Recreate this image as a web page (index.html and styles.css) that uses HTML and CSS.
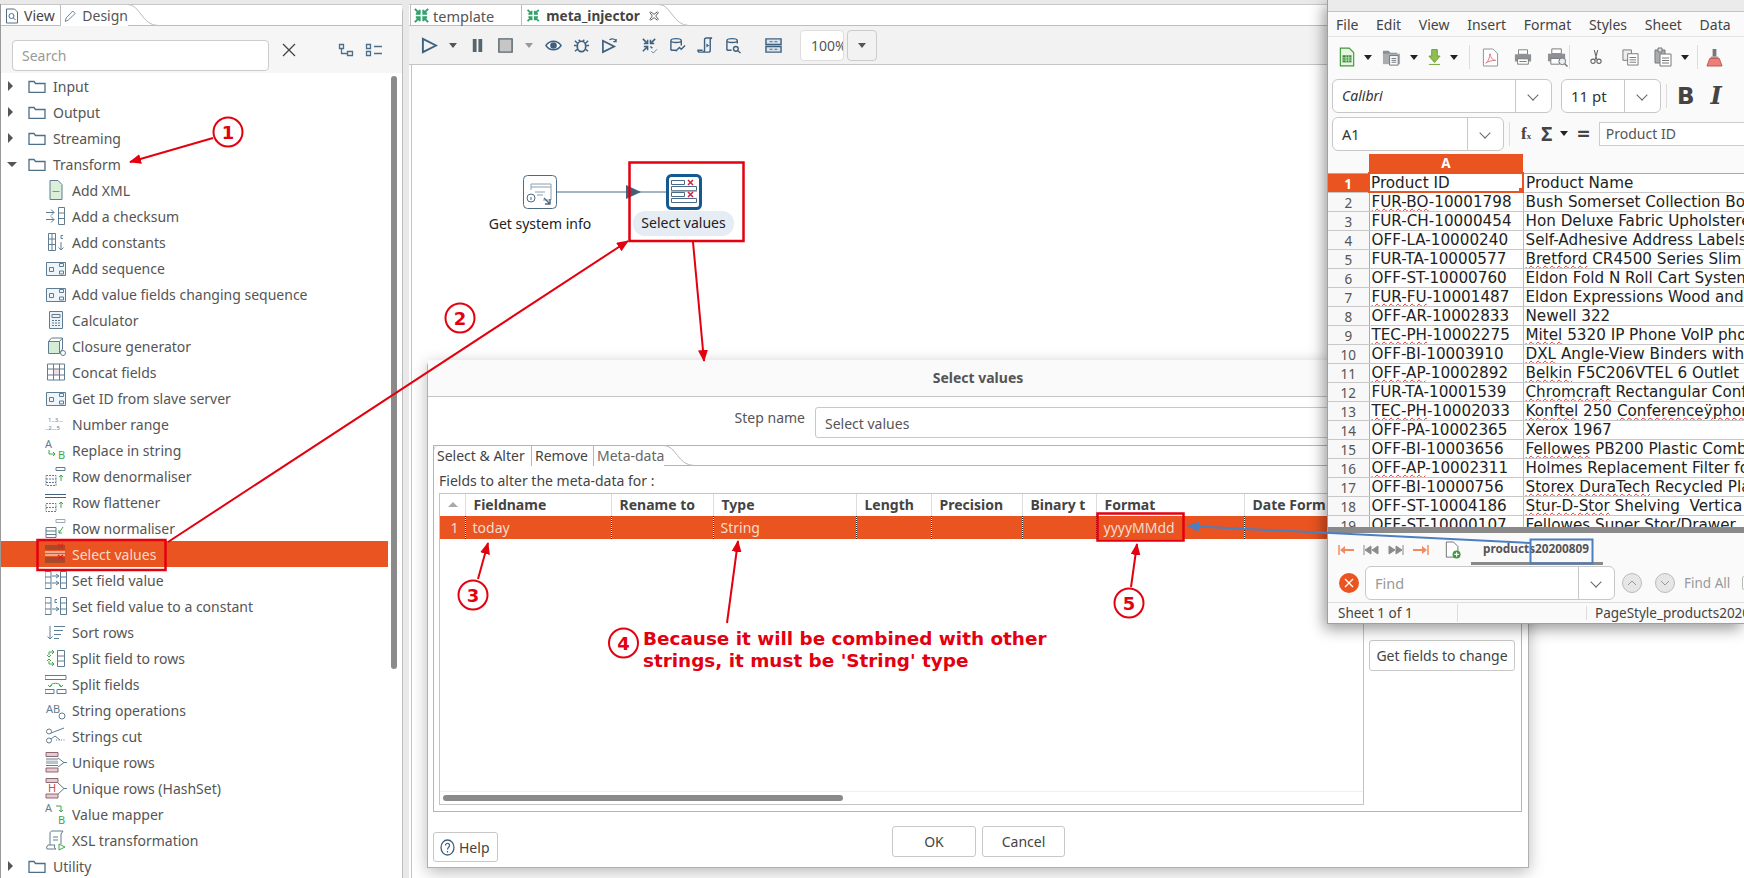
FILE: index.html
```html
<!DOCTYPE html>
<html lang="en">
<head>
  <meta charset="UTF-8" />
  <title>Select values - meta_injector</title>
  <link rel="stylesheet" href="styles.css">
</head>
<body>
  <!-- icon sprite -->
  <svg class="sprite" width="0" height="0">
    <symbol id="i-folder" viewBox="0 0 18 14"><path d="M1 2.500h5l1.500 2H17v9H1z" fill="#fff" stroke="#4d6f8a" stroke-width="1.300"/></symbol>
    <symbol id="i-xml" viewBox="0 0 22 22"><path d="M5 1.500h8l4 4v15H5z" fill="#dcefd8"/><path d="M7.500 12.500h7" stroke="#7b9a8a"/></symbol>
    <symbol id="i-checksum" viewBox="0 0 22 22"><path d="M1 7.500h8M6 4.500l3 3-3 3M1 14.500h8M6 11.500l3 3-3 3"/><path d="M13.500 2.500h6v17h-6zM13.500 8h6M13.500 13.500h6"/></symbol>
    <symbol id="i-constants" viewBox="0 0 22 22"><path d="M3.500 2.500h7v17h-7zM3.500 8h7M3.500 13.500h7M7 2.500v17M16 11v8M13.500 16.500l2.500 2.500 2.500-2.500"/><path d="M18 4.500h-2v3h2"/></symbol>
    <symbol id="i-seq" viewBox="0 0 22 22"><path d="M1.500 5.500h19v13h-19z" fill="#eef5fa"/><path d="M4.500 10.500h4v4h-4zM14.500 6.500h4v3h-4zM14.500 14h4v3h-4z"/></symbol>
    <symbol id="i-calc" viewBox="0 0 22 22"><path d="M4.500 2.500h13v17h-13z" fill="#eef3f6"/><path d="M7 5.500h8v3H7zM7 11.500h2M10 11.500h2M13 11.500h2M7 14h2M10 14h2M13 14h2M7 16.500h2M10 16.500h2M13 16.500h2"/></symbol>
    <symbol id="i-closure" viewBox="0 0 22 22"><path d="M3.500 6.500h11v12h-11z" fill="#d5ecd5"/><path d="M3.500 6.500l3-3.500h11v11l-3 4M14.500 6.500l3-3.500"/><circle cx="18" cy="18" r="2.500" fill="#fff"/></symbol>
    <symbol id="i-grid" viewBox="0 0 22 22"><path d="M8.500 8h6v6h-6z" fill="#f6dde4" stroke="none"/><path d="M2.500 3h17v16h-17zM2.500 8h17M2.500 14h17M8.500 3v16M14.500 3v16"/></symbol>
    <symbol id="i-denorm" viewBox="0 0 22 22"><path d="M11 2.500h9v3h-9z"/><path stroke-dasharray="2 1" d="M1 10.500h10v10H1zM1 14h10M1 17.500h10"/><path class="g" d="M16 16V10M14 12l2-2 2 2"/></symbol>
    <symbol id="i-flat" viewBox="0 0 22 22"><path d="M0 3.500h21M0 6.500h21" stroke="#44607a"/><path stroke-dasharray="2 1" d="M1 12.500h10v8H1zM1 16.500h10"/><path class="g" d="M16 17v-6M14 13l2-2 2 2"/></symbol>
    <symbol id="i-norm" viewBox="0 0 22 22"><path d="M11 2.500h9v3h-9z" stroke="#9ab"/><path d="M1 10.500h10v10H1zM1 14h10M1 17.500h10"/><path class="g" d="M18 10l-4 6M14 13v3h3"/></symbol>
    <symbol id="i-select" viewBox="0 0 22 22"><path d="M0 2h20v5H0zM0 14h20v6H0z" fill="#a8492c" stroke="none"/><path d="M0 9h20M0 12h20" stroke="#fff"/><path d="M13 1l5 4M18 1l-5 4M13 12l5 4M18 12l-5 4" stroke="#d22" stroke-width="1.300"/></symbol>
    <symbol id="i-set" viewBox="0 0 22 22"><path d="M0 2.500h6v17H0zM0 8h6M0 14h6M15.500 2.500h6v17h-6zM15.500 8h6M15.500 14h6M7 7h7M11 5l3 2-3 2M7 14h7M11 12l3 2-3 2"/></symbol>
    <symbol id="i-setc" viewBox="0 0 22 22"><path d="M0 2.500h6v17H0zM0 8h6M0 14h6M15.500 2.500h6v17h-6zM15.500 8h6M15.500 14h6M7 14h7M11 12l3 2-3 2M12 4.500h-2v3h2"/></symbol>
    <symbol id="i-sort" viewBox="0 0 22 22"><path d="M5 5v13M2.500 15.500L5 18l2.500-2.500M9 5.500h11M9 9.500h9M9 13.500h7M9 17.500h5"/></symbol>
    <symbol id="i-splitrows" viewBox="0 0 22 22"><path d="M12.500 3.500h7v16h-7zM12.500 9h7M12.500 14h7"/><path class="g" d="M9 5H4v3M7 3l2 2-2 2M2 8l2 2 2-2M9 17H4v-3M7 15l2 2-2 2M2 14l2-2 2 2"/></symbol>
    <symbol id="i-splitf" viewBox="0 0 22 22"><path d="M0 2.500h21v4H0zM0 16.500h9v4H0zM12 16.500h9v4h-9z"/><path class="g" d="M5 14c0-5 11-5 11 0M3 12l2 2 2-2M14 12l2 2 2-2"/></symbol>
    <symbol id="i-cut" viewBox="0 0 22 22"><circle cx="4" cy="6.500" r="2.500"/><circle cx="4" cy="15.500" r="2.500"/><path d="M6 8l13-5M6 14l4-3 5 4"/><path stroke-dasharray="1 1.500" d="M11 15h10"/></symbol>
    <symbol id="i-uniq" viewBox="0 0 22 22"><path d="M1 1.500h12v4H1zM1 17h12v4H1z" fill="#e8c9cf" stroke="#8a6a72"/><path d="M1 8h12M1 14.500h12"/><path d="M1 9.500h12v3.500H1z" fill="#b8c4cc" stroke="none"/><path d="M13 7l6 4.500-6 4.500M19 11.500h3"/></symbol>
    <symbol id="i-xsl" viewBox="0 0 22 22"><path d="M5 16V4c0-1 1-2 2-2h11l-2 3v10M2 20h9c-2-1-2-3-1-4H3c-1 1-2 3-1 4z"/><path d="M8 8h5M8 11h5"/><path class="g" d="M14 15v6l6-3z"/></symbol>

    <symbol id="t-run" viewBox="0 0 18 18"><path d="M2 2l14 7-14 7z" fill="none" stroke="#3e6180" stroke-width="2"/></symbol>
    <symbol id="t-pause" viewBox="0 0 18 18"><path d="M4 2h4v14H4zM10 2h4v14h-4z" fill="#56646e"/></symbol>
    <symbol id="t-stop" viewBox="0 0 18 18"><path d="M2 2h14v14H2z" fill="#c6c6c6" stroke="#56646e" stroke-width="1.500"/></symbol>
    <symbol id="t-eye" viewBox="0 0 18 18"><path d="M1 9c4-6 12-6 16 0-4 6-12 6-16 0z" fill="#fff" stroke="#3e6180" stroke-width="1.500"/><circle cx="9" cy="9" r="3.500" fill="#3e6180"/></symbol>
    <symbol id="t-bug" viewBox="0 0 18 18"><ellipse cx="9" cy="10" rx="4.500" ry="5.500" fill="none" stroke="#3e6180" stroke-width="1.800"/><path d="M6 3l2 2M12 3l-2 2M1 9h3M14 9h3M2 15l3-2M16 15l-3-2M2 4l3 3M16 4l-3 3" stroke="#3e6180" stroke-width="1.500"/></symbol>
    <symbol id="t-replay" viewBox="0 0 18 18"><path d="M2 4l12 6-12 6z" fill="none" stroke="#3e6180" stroke-width="1.800"/><path d="M9 3c3-2 6-1 7 2M16 2v3h-3" fill="none" stroke="#3e6180" stroke-width="1.300"/></symbol>
    <symbol id="t-check" viewBox="0 0 18 18"><path d="M2 2l5 5M7 3v4H3M15 2l-5 5M10 3v4h4M2 15l5-5M7 14v-4H3M10 10l2 2" fill="none" stroke="#3e6180" stroke-width="1.600"/><path d="M11 15l2 2 4-4" fill="none" stroke="#5f7d92"/></symbol>
    <symbol id="t-db" viewBox="0 0 18 18"><path d="M2 14V4c0-3 11-3 11 0v5M2 4c0 2.500 11 2.500 11 0" fill="none" stroke="#3e6180" stroke-width="1.500"/><path d="M2 14h6M7 15l4-4 2 2 4-4" fill="none" stroke="#3e6180" stroke-width="1.500"/></symbol>
    <symbol id="t-scroll" viewBox="0 0 18 18"><path d="M5 16c2 0 3-1 3-2V3c0-1 1-2 2-2h6c-1 0-2 1-2 2v11c0 1-1 2-2 2H3c-1 0-2-1-2-2h5" fill="none" stroke="#3e6180" stroke-width="1.500"/><path d="M10 7l3 2-3 2z" fill="#3e6180"/></symbol>
    <symbol id="t-dbsearch" viewBox="0 0 18 18"><path d="M2 14V4c0-3 11-3 11 0v3M2 4c0 2.500 11 2.500 11 0M2 14h5" fill="none" stroke="#3e6180" stroke-width="1.500"/><circle cx="11.500" cy="12.500" r="2.500" fill="none" stroke="#3e6180" stroke-width="1.500"/><path d="M13.500 14.500l3 2.500" stroke="#3e6180" stroke-width="1.500"/></symbol>
    <symbol id="t-rows" viewBox="0 0 18 18"><path d="M1 2h16v6H1zM1 10h16v6H1z" fill="#dbe4ec" stroke="#3e6180" stroke-width="1.500"/><path d="M5 5h3M10 5h3M5 13h3M10 13h3" stroke="#3e6180"/></symbol>
    <symbol id="i-trans" viewBox="0 0 18 18"><g fill="none" stroke="#2fa36b" stroke-width="2.200"><path d="M2 2l5 5M7 3v4H3M16 2l-5 5M11 3v4h4M2 16l5-5M7 15v-4H3M16 16l-5-5M11 15v-4h4"/></g></symbol>

    <symbol id="c-new" viewBox="0 0 18 22"><path d="M1.500 1h10l5 5v15h-15z" fill="#e9f5e3" stroke="#3f9c3a" stroke-width="1.300"/><path d="M4 9h10v8H4z" fill="#2f8f2f"/><path d="M4 12h10M4 14.500h10M8 9v8M11 9v8" stroke="#dff0d8" stroke-width=".8"/></symbol>
    <symbol id="c-open" viewBox="0 0 20 20"><path d="M1 3h6l2 2h7v3H1z" fill="#8a8f94"/><path d="M1 6h18v11H1z" fill="#a9adb1"/><path d="M8 8h9v10H8z" fill="#fff" stroke="#6d7277"/><path d="M10 11h5M10 13h5M10 15h5" stroke="#6d7277"/></symbol>
    <symbol id="c-save" viewBox="0 0 14 18"><path d="M4 1h6v7h3l-6 7-6-7h3z" fill="#8fbf4f" stroke="#6d9a33"/><path d="M1 17h12" stroke="#6d9a33"/></symbol>
    <symbol id="c-pdf" viewBox="0 0 18 20"><path d="M1.500 1h10l5 5v13h-15z" fill="#fff" stroke="#8a8f94"/><path d="M4 16c3-2 4-6 4.500-10 1 5 3 7 6 7-4 0-8 1-10.500 3z" fill="none" stroke="#d9737a"/></symbol>
    <symbol id="c-print" viewBox="0 0 20 20"><path d="M5 2h10v5H5z" fill="#fff" stroke="#777"/><path d="M1 7h18v8H1z" fill="#8d9195"/><path d="M4 12h12v6H4z" fill="#fff" stroke="#777"/><path d="M6 15h8" stroke="#777"/></symbol>
    <symbol id="c-preview" viewBox="0 0 22 22"><path d="M5 2h10v5H5z" fill="#fff" stroke="#777"/><path d="M1 7h18v8H1z" fill="#8d9195"/><path d="M4 12h9v6H4z" fill="#fff" stroke="#777"/><circle cx="16" cy="15" r="3.500" fill="#e8eef4" stroke="#6d7277"/><path d="M18.500 17.500l3 3" stroke="#6d7277" stroke-width="1.400"/></symbol>
    <symbol id="c-cut" viewBox="0 0 14 18"><path d="M5 1l3 11M9 1L6 12" stroke="#666" stroke-width="1.300" fill="none"/><circle cx="3.500" cy="14" r="2.500" fill="#fff" stroke="#666" stroke-width="1.300"/><circle cx="10.500" cy="14" r="2.500" fill="#fff" stroke="#666" stroke-width="1.300"/></symbol>
    <symbol id="c-copy" viewBox="0 0 18 18"><path d="M1 1h9v11H1z" fill="#eee" stroke="#777"/><path d="M6 5h11v12H6z" fill="#fff" stroke="#777"/><path d="M8 9h7M8 11.500h7M8 14h7" stroke="#777"/></symbol>
    <symbol id="c-paste" viewBox="0 0 18 20"><path d="M1 3h10v13H1z" fill="#a9adb1" stroke="#777"/><path d="M4 1h4v4H4z" fill="#ddd" stroke="#777"/><path d="M6 7h11v12H6z" fill="#fff" stroke="#777"/><path d="M8 11h7M8 13.500h7M8 16h7" stroke="#777"/></symbol>
    <symbol id="c-brush" viewBox="0 0 18 20"><path d="M7 1h4v8H7z" fill="#777"/><path d="M5 9h8v2H5z" fill="#999"/><path d="M4 11h10l3 8H1z" fill="#ee7f76" stroke="#b55"/></symbol>
    <symbol id="c-add" viewBox="0 0 18 20"><path d="M1.500 1h8l5 5v12h-13z" fill="#fff" stroke="#666"/><circle cx="13" cy="15" r="4.500" fill="#3a9c3a"/><path d="M10.500 15h5M13 12.500v5" stroke="#fff" stroke-width="1.300"/></symbol>
    <symbol id="c-first" viewBox="0 0 16 10"><path d="M2 5l5-4v3h9v2H7v3z" fill="#ef8b5f" stroke="none"/><path d="M1 0v10" stroke="#ef8b5f" stroke-width="1.500"/></symbol>
    <symbol id="c-prev" viewBox="0 0 16 10"><path d="M1 0v10M8 1L2 5l6 4zM15 1L9 5l6 4z" fill="#8b8b8b" stroke="#8b8b8b"/></symbol>
    <symbol id="c-next" viewBox="0 0 16 10"><path d="M15 0v10M8 1l6 4-6 4zM1 1l6 4-6 4z" fill="#8b8b8b" stroke="#8b8b8b"/></symbol>
    <symbol id="c-last" viewBox="0 0 16 10"><path d="M14 5L9 1v3H0v2h9v3z" fill="#ef8b5f" stroke="none"/><path d="M15 0v10" stroke="#ef8b5f" stroke-width="1.500"/></symbol>
  </svg>

  <div class="workbench">
    <!-- left palette -->
    <section class="side">
      <div class="tabbar">
        <div class="tab tab-flat"><svg class="tab-ic" viewBox="0 0 14 16"><path d="M1.500 1h8l3 3v11h-11z" fill="#fff" stroke="#4d6f8a"/><circle cx="6.500" cy="8" r="2.500" fill="none" stroke="#4d6f8a"/><path d="M8.500 10l2 2" stroke="#4d6f8a"/></svg>View</div>
        <div class="tab tab-on"><svg class="tab-ic" viewBox="0 0 16 16"><path d="M1.500 14.500l1-4 8-8.500 3 3-8.500 8z" fill="#fff" stroke="#4d6f8a"/></svg>Design</div>
        <svg class="tab-curve" viewBox="0 0 30 22" width="30" height="22"><path d="M0 .5C12 .5 14 21.500 30 21.500" fill="#fff" stroke="#bdbdbd"/></svg>
      </div>
      <div class="searchbar">
        <div class="search">Search</div>
        <svg class="close-x" width="14" height="14" viewBox="0 0 14 14"><path d="M1 1l12 12M13 1L1 13" stroke="#444" stroke-width="1.300"/></svg>
        <svg class="view-a" width="16" height="14" viewBox="0 0 16 14"><path d="M1.500 1.500h4v4h-4zM9.500 8.500h5v4h-5zM3.500 5.500v5h6" fill="none" stroke="#4d6f8a" stroke-width="1.300"/></svg>
        <svg class="view-b" width="18" height="14" viewBox="0 0 18 14"><path d="M1.500 1.500h4v4h-4zM1.500 8.500h4v4h-4zM9 3.500h8M9 10.500h8" fill="none" stroke="#4d6f8a" stroke-width="1.300"/></svg>
      </div>
      <div class="tree-wrap">
        <ul class="tree">
          <li class="cat"><i class="tw"></i><svg class="fold"><use href="#i-folder"/></svg>Input</li>
          <li class="cat"><i class="tw"></i><svg class="fold"><use href="#i-folder"/></svg>Output</li>
          <li class="cat"><i class="tw"></i><svg class="fold"><use href="#i-folder"/></svg>Streaming</li>
          <li class="cat"><i class="tw tw-open"></i><svg class="fold"><use href="#i-folder"/></svg>Transform</li>
          <li class="step"><svg class="ic"><use href="#i-xml"/></svg>Add XML</li>
          <li class="step"><svg class="ic"><use href="#i-checksum"/></svg>Add a checksum</li>
          <li class="step"><svg class="ic"><use href="#i-constants"/></svg>Add constants</li>
          <li class="step"><svg class="ic"><use href="#i-seq"/></svg>Add sequence</li>
          <li class="step"><svg class="ic"><use href="#i-seq"/></svg>Add value fields changing sequence</li>
          <li class="step"><svg class="ic"><use href="#i-calc"/></svg>Calculator</li>
          <li class="step"><svg class="ic"><use href="#i-closure"/></svg>Closure generator</li>
          <li class="step"><svg class="ic"><use href="#i-grid"/></svg>Concat fields</li>
          <li class="step"><svg class="ic"><use href="#i-seq"/></svg>Get ID from slave server</li>
          <li class="step"><svg class="ic" viewBox="0 0 22 22"><text x="3" y="9" class="tiny">1..3...</text><text x="0" y="17" class="tiny">..2...5</text></svg>Number range</li>
          <li class="step"><svg class="ic" viewBox="0 0 22 22"><text x="0" y="9" class="mini">A</text><text x="13" y="20" class="mini green">B</text><path class="g" d="M4 11v4h6M8 13l2 2-2 2"/></svg>Replace in string</li>
          <li class="step"><svg class="ic"><use href="#i-denorm"/></svg>Row denormaliser</li>
          <li class="step"><svg class="ic"><use href="#i-flat"/></svg>Row flattener</li>
          <li class="step"><svg class="ic"><use href="#i-norm"/></svg>Row normaliser</li>
          <li class="step step-on"><svg class="ic"><use href="#i-select"/></svg>Select values</li>
          <li class="step"><svg class="ic"><use href="#i-set"/></svg>Set field value</li>
          <li class="step"><svg class="ic"><use href="#i-setc"/></svg>Set field value to a constant</li>
          <li class="step"><svg class="ic"><use href="#i-sort"/></svg>Sort rows</li>
          <li class="step"><svg class="ic"><use href="#i-splitrows"/></svg>Split field to rows</li>
          <li class="step"><svg class="ic"><use href="#i-splitf"/></svg>Split fields</li>
          <li class="step"><svg class="ic" viewBox="0 0 22 22"><text x="1" y="14" class="mini">AB</text><circle cx="17" cy="17" r="3" fill="#fff"/></svg>String operations</li>
          <li class="step"><svg class="ic"><use href="#i-cut"/></svg>Strings cut</li>
          <li class="step"><svg class="ic"><use href="#i-uniq"/></svg>Unique rows</li>
          <li class="step"><svg class="ic" viewBox="0 0 22 22"><path d="M1 1.500h12v4H1zM1 17h12v4H1z" fill="#e8c9cf" stroke="#8a6a72"/><path d="M13 6l6 5.500-6 5.500M19 11.500h3"/><text x="3" y="15" class="mini red">H</text></svg>Unique rows (HashSet)</li>
          <li class="step"><svg class="ic" viewBox="0 0 22 22"><text x="0" y="9" class="mini">A</text><text x="13" y="21" class="mini green">B</text><path class="g" d="M11 3h5v6M14 7l2 2 2-2"/></svg>Value mapper</li>
          <li class="step"><svg class="ic"><use href="#i-xsl"/></svg>XSL transformation</li>
          <li class="cat"><i class="tw"></i><svg class="fold"><use href="#i-folder"/></svg>Utility</li>
        </ul>
        <div class="side-scroll"><div class="side-thumb"></div></div>
      </div>
    </section>

    <!-- editor -->
    <section class="editor">
      <div class="tabbar editor-tabs">
        <div class="etab"><svg class="etab-ic"><use href="#i-trans"/></svg>template</div>
        <div class="etab etab-on"><svg class="etab-ic"><use href="#i-trans"/></svg>meta_injector<svg class="etab-x" width="12" height="12" viewBox="0 0 12 12"><path d="M2 1l4 3 4-3 1 1-3 4 3 4-1 1-4-3-4 3-1-1 3-4-3-4z" fill="#fff" stroke="#444"/></svg></div>
        <svg class="tab-curve" viewBox="0 0 30 22" width="30" height="22"><path d="M0 .5C12 .5 14 21.500 30 21.500" fill="#fff" stroke="#bdbdbd"/></svg>
      </div>
      <div class="toolbar">
        <div class="tb"><svg class="tb-ic"><use href="#t-run"/></svg></div>
        <div class="tb-caret"><i class="caret"></i></div>
        <div class="tb"><svg class="tb-ic"><use href="#t-pause"/></svg></div>
        <div class="tb"><svg class="tb-ic"><use href="#t-stop"/></svg></div>
        <div class="tb-caret"><i class="caret caret-off"></i></div>
        <div class="tb"><svg class="tb-ic"><use href="#t-eye"/></svg></div>
        <div class="tb"><svg class="tb-ic"><use href="#t-bug"/></svg></div>
        <div class="tb"><svg class="tb-ic"><use href="#t-replay"/></svg></div>
        <div class="tb-gap"></div>
        <div class="tb"><svg class="tb-ic"><use href="#t-check"/></svg></div>
        <div class="tb"><svg class="tb-ic"><use href="#t-db"/></svg></div>
        <div class="tb"><svg class="tb-ic"><use href="#t-scroll"/></svg></div>
        <div class="tb"><svg class="tb-ic"><use href="#t-dbsearch"/></svg></div>
        <div class="tb-gap"></div>
        <div class="tb"><svg class="tb-ic"><use href="#t-rows"/></svg></div>
        <div class="zoom-box">100%</div>
        <div class="zoom-btn"><i class="caret"></i></div>
      </div>
      <div class="canvas">
        <svg class="hop" width="120" height="20" viewBox="0 0 120 20"><path d="M0 10h110" stroke="#4a6a85" stroke-width="1.200"/><path d="M69 3l15 7-15 7z" fill="#3e6180"/></svg>
        <div class="node node-sys">
          <svg class="node-ic" width="34" height="34" viewBox="0 0 34 34"><rect x=".5" y=".5" width="33" height="33" rx="4" fill="#fff" stroke="#4a6a85"/><path d="M8 15V9h20v16h-8M8 12h20M12 17h10M14 20h6" fill="none" stroke="#8aa0b2"/><circle cx="8" cy="23" r="4" fill="#fff" stroke="#4a6a85"/><path d="M8 22v3" stroke="#4a6a85"/><path d="M21 23l6 6M27 24v5h-5" fill="none" stroke="#4a6a85" stroke-width="1.400"/></svg>
          <span class="node-label">Get system info</span>
        </div>
        <div class="node node-sel">
          <svg class="node-ic" width="36" height="36" viewBox="0 0 36 36"><rect x="1.500" y="1.500" width="33" height="33" rx="4" fill="#fff" stroke="#14598f" stroke-width="3"/><path d="M5.500 6.500h13v4h-13zM5.500 12.500h25v4h-25zM5.500 18.500h13v4h-13zM5.500 24.500h25v4h-25z" fill="#fff" stroke="#4a6a85"/><path d="M5 17h26" stroke="#8a97a2" stroke-width="1.500"/><path d="M22 6l5 5M27 6l-5 5M22 18l5 5M27 18l-5 5" stroke="#d01f3c" stroke-width="1.500"/></svg>
          <span class="node-label node-pill">Select values</span>
        </div>
      </div>
    </section>
  </div>

  <!-- step dialog -->
  <div class="dialog">
    <div class="dlg-title">Select values</div>
    <div class="step-row">
      <label class="step-label">Step name</label>
      <div class="step-input">Select values</div>
    </div>
    <div class="folder">
      <div class="folder-tabs">
        <div class="ftab">Select &amp; Alter</div>
        <div class="ftab">Remove</div>
        <div class="ftab ftab-on">Meta-data</div>
        <svg class="tab-curve ftab-curve" viewBox="0 0 30 21" width="30" height="21"><path d="M0 .5C12 .5 14 20.500 30 20.500" fill="#fff" stroke="#b5b5b5"/></svg>
      </div>
      <div class="folder-body">
        <div class="fields">
          <div class="fields-label">Fields to alter the meta-data for :</div>
          <div class="grid-box">
            <table class="meta">
              <colgroup><col class="c0"><col class="c1"><col class="c2"><col class="c3"><col class="c4"><col class="c5"><col class="c6"><col class="c7"><col class="c8"></colgroup>
              <tr><th class="sort-th"><i class="sort-up"></i></th><th>Fieldname</th><th>Rename to</th><th>Type</th><th>Length</th><th>Precision</th><th>Binary t</th><th>Format</th><th>Date Form</th></tr>
              <tr class="sel"><td class="num">1</td><td>today</td><td></td><td>String</td><td></td><td></td><td></td><td>yyyyMMdd</td><td></td></tr>
            </table>
            <div class="hbar"><div class="hthumb"></div></div>
          </div>
        </div>
        <div class="fields-side"><button class="btn btn-get">Get fields to change</button></div>
      </div>
    </div>
    <div class="dlg-foot">
      <button class="btn btn-help"><svg width="15" height="17" viewBox="0 0 15 17"><ellipse cx="7.500" cy="8.500" rx="6.500" ry="7.500" fill="#fff" stroke="#3e6180" stroke-width="1.300"/><path d="M5.500 6.500c0-3 4-3 4 0 0 2-2 2-2 4M7.500 12v1.500" fill="none" stroke="#3e6180" stroke-width="1.200"/></svg>Help</button>
      <button class="btn btn-ok">OK</button>
      <button class="btn btn-cancel">Cancel</button>
    </div>
  </div>

  <!-- spreadsheet window -->
  <div class="calc">
    <div class="calc-title"></div>
    <div class="calc-menu"><span>File</span><span>Edit</span><span>View</span><span>Insert</span><span>Format</span><span>Styles</span><span>Sheet</span><span>Data</span></div>
    <div class="calc-tools">
      <svg class="ct ct1" width="16" height="20"><use href="#c-new"/></svg><i class="caret caret-dark"></i>
      <svg class="ct ct2" width="19" height="19"><use href="#c-open"/></svg><i class="caret caret-dark"></i>
      <svg class="ct ct3" width="13" height="18"><use href="#c-save"/></svg><i class="caret caret-dark"></i>
      <b class="vsep"></b>
      <svg class="ct" width="17" height="19"><use href="#c-pdf"/></svg>
      <svg class="ct ct-w" width="18" height="18"><use href="#c-print"/></svg>
      <svg class="ct ct-w" width="21" height="21"><use href="#c-preview"/></svg>
      <b class="vsep vsep-wide"></b>
      <svg class="ct" width="12" height="18"><use href="#c-cut"/></svg>
      <svg class="ct ct-w2" width="17" height="17"><use href="#c-copy"/></svg>
      <svg class="ct ct-w" width="18" height="20"><use href="#c-paste"/></svg><i class="caret caret-dark"></i>
      <b class="vsep vsep-end"></b>
      <svg class="ct" width="17" height="19"><use href="#c-brush"/></svg>
    </div>
    <div class="calc-font">
      <div class="combo combo-font"><span>Calibri</span><i class="chev"></i></div>
      <div class="combo combo-size"><span>11 pt</span><i class="chev"></i></div>
      <b class="vsep vsep-tall"></b>
      <span class="fmt-b">B</span>
      <span class="fmt-i">I</span>
    </div>
    <div class="calc-formula">
      <div class="combo combo-name"><span>A1</span><i class="chev"></i></div>
      <b class="vsep vsep-tall"></b>
      <span class="fx">f<small>x</small></span>
      <span class="sigma">Σ</span>
      <i class="caret caret-dark"></i>
      <span class="equals">=</span>
      <div class="formula-input">Product ID</div>
    </div>
    <div class="sheet">
      <table class="cells">
        <colgroup><col class="rh"><col class="ca"><col class="cb"></colgroup>
        <tr class="colhead"><th class="corner"></th><th class="col-a">A</th><th class="corner"></th></tr>
        <tr><th class="row-on">1</th><td class="a1">Product ID</td><td>Product Name</td></tr>
        <tr><th>2</th><td><u>FUR-BO</u>-10001798</td><td>Bush Somerset Collection Boo</td></tr>
        <tr><th>3</th><td>FUR-CH-10000454</td><td>Hon Deluxe Fabric Upholstere</td></tr>
        <tr><th>4</th><td>OFF-LA-10000240</td><td>Self-Adhesive Address Labels</td></tr>
        <tr><th>5</th><td>FUR-TA-10000577</td><td><u>Bretford</u> CR4500 Series Slim</td></tr>
        <tr><th>6</th><td>OFF-ST-10000760</td><td>Eldon Fold N Roll Cart System</td></tr>
        <tr><th>7</th><td><u>FUR-FU</u>-10001487</td><td>Eldon Expressions Wood and</td></tr>
        <tr><th>8</th><td>OFF-AR-10002833</td><td>Newell 322</td></tr>
        <tr><th>9</th><td><u>TEC-PH</u>-10002275</td><td><u>Mitel</u> 5320 IP Phone VoIP pho</td></tr>
        <tr><th>10</th><td>OFF-BI-10003910</td><td><u>DXL</u> Angle-View Binders with</td></tr>
        <tr><th>11</th><td><u>OFF-AP</u>-10002892</td><td><u>Belkin</u> F5C206VTEL 6 Outlet</td></tr>
        <tr><th>12</th><td>FUR-TA-10001539</td><td><u>Chromcraft</u> Rectangular Conf</td></tr>
        <tr><th>13</th><td><u>TEC-PH</u>-10002033</td><td><u>Konftel</u> 250 <u>Conferenceÿphor</u></td></tr>
        <tr><th>14</th><td>OFF-PA-10002365</td><td>Xerox 1967</td></tr>
        <tr><th>15</th><td>OFF-BI-10003656</td><td><u>Fellowes</u> PB200 Plastic Comb</td></tr>
        <tr><th>16</th><td><u>OFF-AP</u>-10002311</td><td>Holmes Replacement Filter fo</td></tr>
        <tr><th>17</th><td>OFF-BI-10000756</td><td><u>Storex DuraTech</u> Recycled Pla</td></tr>
        <tr><th>18</th><td>OFF-ST-10004186</td><td><u>Stur-D-Stor</u> Shelving  Vertica</td></tr>
        <tr><th>19</th><td>OFF-ST-10000107</td><td>Fellowes Super Stor/Drawer</td></tr>
      </table>
    </div>
    <div class="sheet-bar"></div>
    <div class="sheet-tabs">
      <svg class="nav" width="16" height="10"><use href="#c-first"/></svg>
      <svg class="nav" width="16" height="10"><use href="#c-prev"/></svg>
      <svg class="nav" width="16" height="10"><use href="#c-next"/></svg>
      <svg class="nav" width="16" height="10"><use href="#c-last"/></svg>
      <svg class="nav-add" width="16" height="18"><use href="#c-add"/></svg>
      <div class="sheet-tab">products20200809</div>
    </div>
    <div class="findbar">
      <div class="find-close"><svg width="10" height="10" viewBox="0 0 10 10"><path d="M1 1l8 8M9 1L1 9" stroke="#fff" stroke-width="1.300"/></svg></div>
      <div class="combo combo-find"><span>Find</span><i class="chev"></i></div>
      <div class="round"><svg width="10" height="6" viewBox="0 0 10 6"><path d="M1 5l4-4 4 4" fill="none" stroke="#999"/></svg></div>
      <div class="round"><svg width="10" height="6" viewBox="0 0 10 6"><path d="M1 1l4 4 4-4" fill="none" stroke="#999"/></svg></div>
      <span class="find-all">Find All</span>
      <div class="find-check"></div>
    </div>
    <div class="statusbar">
      <span class="st1">Sheet 1 of 1</span>
      <span class="st2"></span>
      <span class="st3">PageStyle_products202008</span>
    </div>
  </div>

  <!-- hand drawn annotations -->
  <svg class="marks" width="1744" height="878" viewBox="0 0 1744 878">
    <defs>
      <marker id="head-red" markerWidth="12" markerHeight="10" refX="11" refY="5" orient="auto" markerUnits="userSpaceOnUse"><path d="M0 0l12 5-12 5z" fill="#e3000f"/></marker>
      <marker id="head-blue" markerWidth="12" markerHeight="10" refX="11" refY="5" orient="auto" markerUnits="userSpaceOnUse"><path d="M0 0l12 5-12 5z" fill="#4a7fc1"/></marker>
    </defs>
    <g class="red-line">
      <path d="M213 138L130 162" marker-end="url(#head-red)"/>
      <path d="M168 542L628 241" marker-end="url(#head-red)"/>
      <path d="M693 242L704 361" marker-end="url(#head-red)"/>
      <path d="M478 579L488 543" marker-end="url(#head-red)"/>
      <path d="M727 623L738 541" marker-end="url(#head-red)"/>
      <path d="M1131 587L1137 544" marker-end="url(#head-red)"/>
      <rect x="37.500" y="540" width="128" height="30"/>
      <rect x="629.500" y="162.500" width="114" height="78.500"/>
      <rect x="1097.500" y="513.500" width="86" height="27"/>
      <circle cx="228" cy="132" r="14.500"/>
      <circle cx="460" cy="318" r="14.500"/>
      <circle cx="473" cy="595" r="14.500"/>
      <circle cx="623.500" cy="643" r="14.500"/>
      <circle cx="1129" cy="603" r="14.500"/>
    </g>
    <g class="blue-line">
      <path d="M1530 543L1188 526" marker-end="url(#head-blue)"/>
      <rect x="1530.500" y="539.500" width="62" height="24"/>
    </g>
    <g class="mark-num">
      <text x="228" y="138.500">1</text>
      <text x="460" y="324.500">2</text>
      <text x="473" y="601.500">3</text>
      <text x="623.500" y="649.500">4</text>
      <text x="1129" y="609.500">5</text>
    </g>
  </svg>
  <div class="note">Because it will be combined with other<br />strings, it must be 'String' type</div>
</body>
</html>
```

FILE: styles.css
```css
* {
  box-sizing: border-box;
}

html, body {
  margin: 0;
  height: 878px;
  overflow: hidden;
}

body {
  position: relative;
  width: 1744px;
  font-family: "Noto Sans", "Open Sans", sans-serif;
  font-size: 14px;
  color: #555;
  background: #fff;
}

.sprite {
  position: absolute;
}

.workbench {
  display: flex;
  height: 878px;
  padding-top: 4px;
  background: #e9e9e9;
}

/* tabs shared */
.tabbar {
  display: flex;
  align-items: stretch;
  height: 22px;
  background: #fff;
  border-bottom: 1px solid #bdbdbd;
  border-top: 1px solid #c8c8c8;
}

.tab-curve {
  flex: none;
  margin-top: -1px;
}

/* left palette */
.side {
  width: 403px;
  display: flex;
  flex-direction: column;
  background: #fff;
  border-left: 1px solid #999;
  border-right: 1px solid #bdbdbd;
  border-top-right-radius: 8px;
}

.tab {
  display: flex;
  align-items: center;
  gap: 5px;
  height: 21px;
}

.tab-flat {
  padding-left: 4px;
  width: 60px;
  color: #444;
  border-right: 1px solid #bdbdbd;
}

.tab-on {
  padding-left: 3px;
  width: 67px;
  background: #fff;
}

.tab-ic {
  width: 14px;
  height: 16px;
}

.searchbar {
  position: relative;
  display: flex;
  align-items: center;
  height: 47px;
  padding-left: 11px;
  background: #f6f6f6;
}

.search {
  width: 257px;
  height: 31px;
  margin-top: 11px;
  padding: 5px 9px;
  color: #999;
  background: #fff;
  border: 1px solid #ccc;
  border-radius: 4px;
}

.close-x {
  margin-left: 13px;
}

.view-a {
  margin-left: 42px;
}

.view-b {
  margin-left: 11px;
}

.tree-wrap {
  position: relative;
  flex: 1;
  overflow: hidden;
}

.tree {
  list-style: none;
  margin: 0;
  padding: 0;
  width: 387px;
}

.tree li {
  display: flex;
  align-items: center;
  height: 26px;
  white-space: nowrap;
}

.cat {
  padding-left: 7px;
}

.tw {
  width: 0;
  height: 0;
  margin-right: 15px;
  border-left: 5px solid #555;
  border-top: 5px solid transparent;
  border-bottom: 5px solid transparent;
}

.tw-open {
  margin-left: -1px;
  margin-right: 11px;
  border-top: 5px solid #555;
  border-left: 5px solid transparent;
  border-right: 5px solid transparent;
  border-bottom: 0;
}

.fold {
  width: 18px;
  height: 14px;
  margin-right: 7px;
}

.step {
  padding-left: 44px;
}

.ic {
  flex: none;
  width: 22px;
  height: 22px;
  margin-right: 5px;
  fill: none;
  stroke: #5f7d92;
  stroke-width: 1;
}

.ic .g,
.g {
  stroke: #3fa648;
}

.ic .tiny {
  font-size: 6px;
  fill: #5f7d92;
  stroke: none;
}

.ic .mini {
  font-size: 11px;
  fill: #5f7d92;
  stroke: none;
}

.ic .mini.green {
  fill: #3fa648;
}

.ic .mini.red {
  fill: #cc4a55;
}

.step-on {
  color: #f7dccb;
  background: #e95420;
}

.side-scroll {
  position: absolute;
  top: 3px;
  right: 5px;
  width: 6px;
}

.side-thumb {
  height: 593px;
  background: #8a8a8a;
  border-radius: 3px;
}

/* editor */
.editor {
  flex: 1;
  display: flex;
  flex-direction: column;
  margin-left: 6px;
  background: #fff;
}

.editor-tabs {
  padding-left: 1px;
}

.etab {
  display: flex;
  align-items: center;
  gap: 3px;
  width: 111px;
  height: 21px;
  padding-left: 2px;
  font-size: 14.500px;
  border-left: 1px solid #bdbdbd;
}

.etab-on {
  width: 138px;
  gap: 6px;
  padding-left: 4px;
  font-size: 13.600px;
  font-weight: 700;
  color: #444;
}

.etab-ic {
  width: 17px;
  height: 17px;
}

.etab-x {
  margin-left: 3px;
}

.toolbar {
  display: flex;
  align-items: center;
  height: 39px;
  padding-left: 6px;
  background: #f2f2f2;
  border-bottom: 1px solid #c4c4c4;
}

.tb {
  display: flex;
  justify-content: center;
  width: 28px;
}

.tb-ic {
  width: 17px;
  height: 17px;
}

.tb-caret {
  display: flex;
  justify-content: center;
  width: 20px;
}

.caret {
  display: inline-block;
  width: 0;
  height: 0;
  border-left: 4.500px solid transparent;
  border-right: 4.500px solid transparent;
  border-top: 5px solid #555;
}

.caret-off {
  border-top-color: #999;
}

.caret-dark {
  border-top-color: #222;
}

.tb-gap {
  width: 12px;
}

.zoom-box {
  width: 44px;
  height: 31px;
  margin-left: 13px;
  padding: 5px 0 0 10px;
  overflow: hidden;
  white-space: nowrap;
  background: #fff;
  border: 1px solid #ddd;
  border-radius: 4px;
}

.zoom-btn {
  display: flex;
  align-items: center;
  justify-content: center;
  width: 30px;
  height: 31px;
  margin-left: 3px;
  border: 1px solid #ccc;
  border-radius: 4px;
}

.canvas {
  position: relative;
  flex: 1;
  margin-left: 2px;
  background: #fff;
  border-left: 1px solid #c4c4c4;
}

.node {
  position: absolute;
  display: flex;
  flex-direction: column;
  align-items: center;
  color: #222;
  font-size: 14px;
}

.node-sys {
  left: 63px;
  top: 110px;
  width: 130px;
}

.node-sel {
  left: 221px;
  top: 109px;
  width: 101px;
}

.node-ic {
  flex: none;
}

.node-label {
  margin-top: 5px;
  white-space: nowrap;
}

.node-pill {
  width: 101px;
  height: 25px;
  margin-top: 1px;
  line-height: 24px;
  text-align: center;
  background: #e6ecf4;
  border-radius: 12px;
}

.hop {
  position: absolute;
  left: 145px;
  top: 117px;
}

/* step dialog */
.dialog {
  position: absolute;
  left: 427px;
  top: 360px;
  width: 1102px;
  height: 508px;
  display: flex;
  flex-direction: column;
  background: #fff;
  border: 1px solid #b0b0b0;
  border-top: 0;
  border-radius: 6px 6px 0 0;
  box-shadow: 0 4px 16px rgba(0, 0, 0, 0.28);
}

.dlg-title {
  flex: none;
  height: 37px;
  line-height: 36px;
  text-align: center;
  font-weight: 700;
  color: #555;
  background: #fafafa;
  border-bottom: 1px solid #c4c4c4;
}

.step-row {
  flex: none;
  display: flex;
  height: 30px;
  margin-top: 10px;
}

.step-label {
  width: 377px;
  text-align: right;
  padding-top: 1px;
}

.step-input {
  width: 701px;
  height: 31px;
  margin-left: 10px;
  padding: 6px 9px;
  border: 1px solid #c8c8c8;
  border-radius: 3px;
}

.folder {
  flex: none;
  width: 1089px;
  height: 367px;
  margin: 8px 0 0 5px;
  display: flex;
  flex-direction: column;
  border: 1px solid #b5b5b5;
  border-top: 0;
}

.folder-tabs {
  flex: none;
  display: flex;
  height: 21px;
  margin: 0 -1px;
  border-top: 1px solid #b5b5b5;
  border-bottom: 1px solid #b5b5b5;
  overflow: visible;
}

.ftab {
  height: 20px;
  padding: 0 3px;
  line-height: 19px;
  font-size: 14px;
  color: #444;
  border-left: 1px solid #b5b5b5;
  white-space: nowrap;
  background: #fff;
}

.ftab:nth-child(1) {
  width: 98px;
  border-radius: 5px 0 0 0;
}

.ftab:nth-child(2) {
  width: 62px;
}

.ftab-on {
  color: #666;
  width: 71px;
}

.ftab-curve {
  margin-top: -1px;
}

.folder-body {
  flex: 1;
  display: flex;
  min-height: 0;
}

.fields {
  width: 930px;
  display: flex;
  flex-direction: column;
  padding: 0 0 6px 5px;
}

.fields-label {
  flex: none;
  height: 27px;
  line-height: 29px;
  color: #444;
}

.grid-box {
  flex: 1;
  display: flex;
  flex-direction: column;
  border: 1px solid #c4c4c4;
}

.meta {
  flex: none;
  width: 924px;
  table-layout: fixed;
  border-collapse: collapse;
}

.c0 { width: 25px; }
.c1 { width: 146px; }
.c2 { width: 102px; }
.c3 { width: 143px; }
.c4 { width: 75px; }
.c5 { width: 91px; }
.c6 { width: 74px; }
.c7 { width: 148px; }
.c8 { width: 120px; }

.meta th {
  height: 22px;
  padding: 0 0 2px 8px;
  overflow: hidden;
  white-space: nowrap;
  text-align: left;
  font-size: 14px;
  color: #444;
  background: #fff;
  border-right: 1px solid #ddd;
}

.sort-th {
  padding-left: 7px;
}

.sort-up {
  display: inline-block;
  width: 0;
  height: 0;
  border-left: 5px solid transparent;
  border-right: 5px solid transparent;
  border-bottom: 5px solid #aaa;
  vertical-align: 3px;
}

.meta td {
  height: 23px;
  padding: 0 0 0 7px;
  color: #f7dccb;
  background: #e95420;
  border-right: 1px dotted #222;
  white-space: nowrap;
  overflow: hidden;
}

.meta td:last-child {
  border-right: 0;
}

.meta .num {
  padding: 0 6px 0 0;
  text-align: right;
}

.hbar {
  margin-top: auto;
  height: 13px;
  padding: 3px 0 0 3px;
  border-top: 1px solid #f0f0f0;
}

.hthumb {
  width: 400px;
  height: 6px;
  background: #8a8a8a;
  border-radius: 3px;
}

.fields-side {
  padding: 174px 0 0 5px;
}

.btn {
  font-family: inherit;
  font-size: 14px;
  color: #444;
  background: #fff;
  border: 1px solid #c8c8c8;
  border-radius: 3px;
  padding: 0;
}

.btn-get {
  width: 146px;
  height: 31px;
  white-space: nowrap;
}

.dlg-foot {
  flex: 1;
  display: flex;
  padding-left: 5px;
  align-items: flex-start;
}

.btn-help {
  display: flex;
  align-items: center;
  gap: 4px;
  width: 65px;
  height: 30px;
  margin-top: 20px;
  padding-left: 6px;
}

.btn-ok {
  width: 84px;
  height: 31px;
  margin: 14px 0 0 394px;
}

.btn-cancel {
  width: 83px;
  height: 31px;
  margin: 14px 0 0 6px;
}

/* spreadsheet window */
.calc {
  position: absolute;
  left: 1327px;
  top: 0;
  width: 417px;
  height: 624px;
  display: flex;
  flex-direction: column;
  overflow: hidden;
  background: #fafafa;
  border-left: 1px solid #a0a0a0;
  border-bottom: 1px solid #a0a0a0;
  box-shadow: -3px 5px 14px rgba(0, 0, 0, 0.4);
}

.calc-title {
  flex: none;
  height: 12px;
  background: #ebebeb;
  border-bottom: 1px solid #c4c4c4;
}

.calc-menu {
  flex: none;
  display: flex;
  gap: 17.700px;
  height: 25px;
  padding-left: 8px;
  line-height: 25px;
  font-size: 14px;
  color: #444;
  border-bottom: 1px solid #e4e4e4;
}

.calc-tools {
  flex: none;
  display: flex;
  align-items: center;
  height: 40px;
  padding-left: 11px;
}

.ct {
  flex: none;
}

.calc-tools .caret {
  flex: none;
  margin: 0 10px 0 9px;
  border-left-width: 4px;
  border-right-width: 4px;
}

.ct-w {
  margin-left: 15px;
}

.ct-w2 {
  margin-left: 20px;
}

.vsep {
  flex: none;
  width: 1px;
  height: 24px;
  margin: 0 12px 0 1px;
  background: #ddd;
}

.vsep-wide {
  margin-right: 20px;
}

.vsep-end {
  margin: 0 8px 0 -2px;
}

.vsep-tall {
  height: 24px;
  margin: 0 5px;
}

.calc-font,
.calc-formula {
  flex: none;
  display: flex;
  align-items: center;
  padding-left: 4px;
}

.calc-font {
  height: 37px;
}

.calc-formula {
  height: 39px;
}

.combo {
  flex: none;
  display: flex;
  align-items: stretch;
  height: 34px;
  background: #fff;
  border: 1px solid #c8c8c8;
  border-radius: 6px;
  line-height: 32px;
  color: #333;
}

.combo span {
  flex: 1;
  padding-left: 9px;
  border-right: 1px solid #c8c8c8;
}

.chev {
  position: relative;
  width: 35px;
  flex: none;
}

.chev::after {
  content: "";
  position: absolute;
  left: 13px;
  top: 11px;
  width: 7px;
  height: 7px;
  border-right: 1px solid #666;
  border-bottom: 1px solid #666;
  transform: rotate(45deg);
}

.combo-font {
  width: 220px;
  font-style: italic;
  font-size: 14px;
}

.combo-size {
  width: 100px;
  margin-left: 9px;
  font-size: 15px;
}

.combo-name {
  width: 172px;
  font-size: 14.500px;
}

.fmt-b {
  margin-left: 5px;
  font-family: "DejaVu Sans", sans-serif;
  font-size: 23px;
  font-weight: 700;
  color: #444;
}

.fmt-i {
  margin-left: 16px;
  font-family: "DejaVu Serif", "Liberation Serif", serif;
  font-size: 24px;
  font-style: italic;
  font-weight: 700;
  color: #444;
}

.fx {
  margin-left: 6px;
  font-family: "Liberation Serif", serif;
  font-size: 17px;
  font-weight: 700;
  color: #444;
}

.fx small {
  font-size: 9px;
}

.sigma {
  margin-left: 10px;
  font-size: 19px;
  font-weight: 700;
  color: #444;
}

.calc-formula .caret {
  flex: none;
  margin: 0 9px 0 8px;
  border-left-width: 4px;
  border-right-width: 4px;
}

.equals {
  font-size: 22px;
  font-weight: 700;
  line-height: 1;
  color: #444;
  margin-top: -4px;
}

.formula-input {
  flex: 1;
  height: 24px;
  margin-left: 9px;
  padding-left: 6px;
  line-height: 22px;
  color: #555;
  background: #fff;
  border: 1px solid #ccc;
  border-right: 0;
}

.sheet {
  flex: none;
  height: 373px;
  margin-top: 1px;
  overflow: hidden;
  background: #fff;
}

.cells {
  width: 416px;
  table-layout: fixed;
  border-collapse: collapse;
  font-family: "DejaVu Sans", sans-serif;
  font-size: 15.200px;
  color: #222;
}

.rh { width: 41px; }
.ca { width: 154px; }
.cb { width: 221px; }

.cells td,
.cells th {
  height: 19px;
  padding: 0;
  line-height: 16px;
  overflow: hidden;
  white-space: pre;
  border-bottom: 1px solid #c8c8c8;
}

.cells td {
  padding-left: 2px;
  border-right: 1px solid #bbb;
  font-weight: 400;
}

.cells th {
  font-family: "Noto Sans", sans-serif;
  font-weight: 400;
  font-size: 13.500px;
  line-height: 14px;
  color: #555;
  padding-top: 3px;
  background: #f8f8f8;
  border-right: 1px solid #aaa;
}

.cells td:last-child {
  border-right: 0;
}

.colhead th {
  padding: 0;
  background: #fafafa;
  border-right: 0;
  border-bottom: 1px solid #aaa;
}

.cells .col-a {
  font-weight: 700;
  color: #fff;
  background: #e95420;
}

.cells .row-on {
  font-weight: 700;
  color: #fff;
  background: #e95420;
}

.cells .a1 {
  position: relative;
  border: 2px solid #e95420;
  padding-left: 1px;
  line-height: 14px;
}

.cells .a1::after {
  content: "";
  position: absolute;
  right: 0;
  bottom: 0;
  width: 3px;
  height: 3px;
  background: #e95420;
}

.cells u {
  text-decoration: underline wavy #e0241c 1.200px;
  text-underline-offset: 1px;
}

.sheet-bar {
  flex: none;
  height: 6px;
  background: #8a8a8a;
}

.sheet-tabs {
  flex: none;
  display: flex;
  align-items: center;
  height: 33px;
  padding-left: 10px;
}

.nav {
  flex: none;
  margin-right: 9px;
}

.nav-add {
  flex: none;
  margin: 0 10px 0 7px;
}

.sheet-tab {
  width: 132px;
  height: 30px;
  line-height: 27px;
  padding-left: 12px;
  font-size: 11.800px;
  font-weight: 700;
  color: #555;
  white-space: nowrap;
  border-bottom: 3px solid #8a8a8a;
}

.findbar {
  flex: none;
  display: flex;
  align-items: center;
  height: 37px;
  padding: 0 0 3px 11px;
  border-bottom: 1px solid #ddd;
}

.find-close {
  flex: none;
  display: flex;
  align-items: center;
  justify-content: center;
  width: 20px;
  height: 20px;
  background: #e95420;
  border-radius: 50%;
}

.combo-find {
  width: 250px;
  margin-left: 6px;
  color: #999;
  font-size: 14.500px;
}

.round {
  flex: none;
  display: flex;
  align-items: center;
  justify-content: center;
  width: 20px;
  height: 20px;
  margin-left: 7px;
  margin-right: 6px;
  background: #e6e6e6;
  border: 1px solid #bbb;
  border-radius: 50%;
}

.find-all {
  margin-left: 3px;
  font-size: 13.500px;
  color: #999;
  white-space: nowrap;
}

.find-check {
  flex: none;
  width: 14px;
  height: 14px;
  margin-left: 12px;
  background: #fff;
  border: 1px solid #bbb;
  border-radius: 2px;
}

.statusbar {
  flex: 1;
  display: flex;
  align-items: center;
  padding-left: 10px;
  font-size: 13.500px;
  color: #444;
}

.st1 {
  width: 120px;
  flex: none;
  border-right: 1px solid #ddd;
}

.st2 {
  width: 129px;
  height: 14px;
  flex: none;
  border-right: 1px solid #ddd;
}

.st3 {
  margin-left: 8px;
  white-space: nowrap;
}

/* annotations */
.marks {
  position: absolute;
  left: 0;
  top: 0;
  pointer-events: none;
}

.red-line {
  fill: none;
  stroke: #e3000f;
  stroke-width: 2;
}

.red-line rect {
  stroke-width: 2.500;
}

.blue-line {
  fill: none;
  stroke: #4a7fc1;
  stroke-width: 2;
}

.mark-num {
  font-family: "DejaVu Sans", sans-serif;
  font-size: 18px;
  font-weight: 700;
  fill: #e3000f;
  text-anchor: middle;
}

.note {
  position: absolute;
  left: 643px;
  top: 628px;
  font-family: "DejaVu Sans", sans-serif;
  font-size: 18.400px;
  font-weight: 700;
  line-height: 22px;
  color: #e3000f;
  white-space: nowrap;
}
```
